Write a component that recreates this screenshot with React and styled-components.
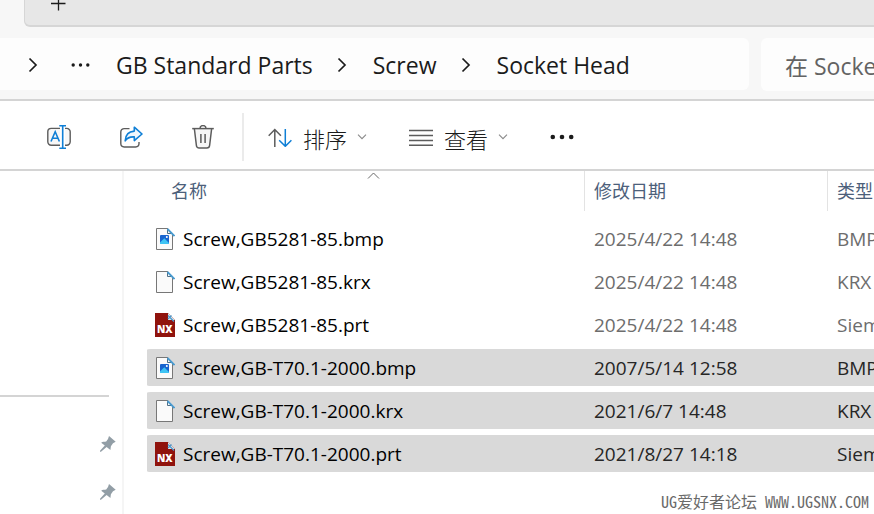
import styled, { createGlobalStyle } from 'styled-components';


const GlobalStyle = createGlobalStyle`
  * {
    box-sizing: border-box;
  }

  body {
    margin: 0;
    background: #ffffff;
    color: #1b1b1b;
    font-family: "Open Sans", "Noto Sans CJK SC", sans-serif;
  }

  button, input {
    font: inherit;
    color: inherit;
    border: none;
    background: none;
    padding: 0;
  }

  svg {
    display: block;
    flex: none;
  }
`;

const Window = styled.div`
  display: flex;
  flex-direction: column;
  height: 100vh;
  overflow: hidden;
`;

const TabStrip = styled.div`
  padding-left: 24px;
  background: #f7f7f7;
`;

const TabArea = styled.div`
  height: 27px;
  padding-left: 25px;
  background: #e7e7e7;
  border-left: 1px solid #d6d6d6;
  border-bottom: 2px solid #d6d6d6;
  border-bottom-left-radius: 6px;
`;

const AddressRow = styled.div`
  display: flex;
  align-items: flex-start;
  gap: 12px;
  padding: 11px 0 8px;
  background: #f7f7f7;
  border-bottom: 2px solid #d4d4d4;
`;

const AddressBar = styled.nav`
  flex: 1;
  display: flex;
  align-items: center;
  height: 52px;
  padding: 2px 0 0 27px;
  background: #fdfdfd;
  border-radius: 0 6px 6px 0;
`;

const Crumbs = styled.ol`
  display: flex;
  align-items: center;
  gap: 23px;
  margin: 0;
  padding: 0 0 0 26px;
  list-style: none;
  font-size: 23px;
  line-height: 32px;
`;

const Crumb = styled.li`
  display: flex;
  align-items: center;
  gap: 23px;
`;

const CrumbLink = styled.a`
  color: inherit;
  text-decoration: none;
  white-space: nowrap;
`;

const SearchInput = styled.input`
  width: 113px;
  height: 53px;
  padding: 2px 0 0 24px;
  background: #fdfdfd;
  border-radius: 6px 0 0 6px;
  font-size: 23px;

  &::placeholder {
    color: #636363;
    opacity: 1;
  }
`;

const Toolbar = styled.div`
  display: flex;
  align-items: center;
  height: 70px;
  padding: 4px 0 0 47px;
  border-bottom: 2px solid #d4d4d4;
`;

const ToolGroup = styled.div`
  display: flex;
  align-items: center;
  gap: ${props => props.$gap}px;
`;

const ToolButton = styled.button`
  display: flex;
  align-items: center;
  gap: 10px;
  font-size: 22px;
  line-height: 32px;
`;

const ToolLabel = styled.span`
  padding: 4px 0 0 1px;
  font-weight: 300;
`;

const Separator = styled.div`
  width: 2px;
  height: 48px;
  margin: 0 24px 0 27px;
  background: #ebebeb;
`;

const Body = styled.div`
  flex: 1;
  display: flex;
  min-height: 0;
`;

const Sidebar = styled.aside`
  flex: none;
  width: 124px;
  padding-top: 224px;
  border-right: 2px solid #f5f5f5;
`;

const SidebarLine = styled.hr`
  height: 2px;
  margin: 0 13px 39px 0;
  border: none;
  background: #d4d4d4;
`;

const PinList = styled.div`
  display: flex;
  flex-direction: column;
  align-items: flex-end;
  gap: 32px;
  padding-right: 6px;
`;

const Main = styled.main`
  flex: 1;
  min-width: 0;
  display: flex;
  flex-direction: column;
  padding-left: 23px;
`;

const FileTable = styled.table`
  width: 100%;
  table-layout: fixed;
  border-spacing: 0;
  font-size: 19px;
  line-height: 26px;
`;

const HeadCell = styled.th`
  width: ${props => props.$width};
  height: 46px;
  padding: 0;
  vertical-align: top;
  text-align: left;
  font-size: 18px;
  font-weight: normal;
  color: #4c607a;
`;

const HeadLabel = styled.div`
  position: relative;
  height: 40px;
  padding: 7px 0 0 ${props => props.$indent}px;
  border-right: ${props => props.$last ? 'none' : '1px solid #e3e3e3'};
  white-space: nowrap;
  overflow: hidden;
`;

const SortMark = styled.svg`
  position: absolute;
  top: 1px;
  left: 50%;
`;

const FileRow = styled.tr`
  color: ${props => props.$selected ? '#262626' : '#6d6d6d'};

  td {
    height: 43px;
    padding: 0 0 0 9px;
    border-top: 3px solid transparent;
    border-bottom: 3px solid transparent;
    background: ${props => props.$selected ? '#d9d9d9' : 'transparent'};
    background-clip: padding-box;
    white-space: nowrap;
    overflow: hidden;
  }

  td:first-child {
    padding-left: 8px;
    border-radius: 4px 0 0 4px;
  }
`;

const FileName = styled.div`
  display: flex;
  align-items: center;
  gap: 8px;
  color: #000000;
`;

const Footer = styled.footer`
  padding: 14px 5px 0 0;
  text-align: right;
  font-family: "Noto Sans Mono CJK SC", "Liberation Mono", "Noto Sans CJK SC", monospace;
  font-size: 16px;
  font-weight: 300;
  line-height: 24px;
  color: #6a6a6a;
  white-space: nowrap;
`;


const PlusIcon = () => (
  <svg width="16" height="11" viewBox="0 0 16 11" stroke="#1b1b1b" strokeWidth="1.3">
    <path d="M1 3.5H15.5M8.5 -4V10.5" />
  </svg>
);

const ChevronRight = () => (
  <svg width="14" height="16" viewBox="0 0 14 16" fill="none" stroke="#1b1b1b" strokeWidth="1.7">
    <path d="M2.5 1.5L9 8L2.5 14.5" />
  </svg>
);

const ChevronDown = () => (
  <svg width="10" height="6" viewBox="0 0 10 6" fill="none" stroke="#8a8a8a" strokeWidth="1.1">
    <path d="M1 .7L5 4.7L9 .7" />
  </svg>
);

const Dots = ({ width, radius }) => (
  <svg width={width} height="8" viewBox={`0 0 ${width} 8`} fill="#1b1b1b">
    <circle cx={radius + 0.5} cy="4" r={radius} />
    <circle cx={width / 2} cy="4" r={radius} />
    <circle cx={width - radius - 0.5} cy="4" r={radius} />
  </svg>
);

const RenameIcon = () => (
  <svg width="24" height="24" viewBox="0 0 24 24" fill="none" strokeWidth="1.4">
    <path d="M13 3.4H4.2A3.4 3.4 0 0 0 .8 6.8V16.8A3.4 3.4 0 0 0 4.2 20.2H13" fill="#f7f7f7" stroke="#5c5c5c" />
    <path d="M18 3.4H19.8A3.4 3.4 0 0 1 23.2 6.8V16.8A3.4 3.4 0 0 1 19.8 20.2H18" fill="#f7f7f7" stroke="#5c5c5c" />
    <path d="M4 16.5L8.2 6.8L12.4 16.5M5.5 13.2H11" stroke="#0f7fd6" strokeWidth="1.6" />
    <path d="M12.3 .8H19M12.3 23.2H19M15.7 .8V23.2" stroke="#0f7fd6" strokeWidth="1.6" />
  </svg>
);

const ShareIcon = () => (
  <svg width="24" height="24" viewBox="0 0 24 24" fill="none" strokeWidth="1.4" strokeLinejoin="round">
    <path d="M10.5 3.6H5.2A3.4 3.4 0 0 0 1.8 7V18.6A3.4 3.4 0 0 0 5.2 22H16.6A3.4 3.4 0 0 0 20 18.6V17" stroke="#5c5c5c" />
    <path d="M15.3 2.2L23 9L15.3 15.6V11.9C11 11.6 8 13 6.2 15.8C6.4 10.3 9.5 6.5 15.3 6.1Z" fill="#f0f7fd" stroke="#0f7fd6" strokeWidth="1.6" />
  </svg>
);

const TrashIcon = () => (
  <svg width="24" height="24" viewBox="0 0 24 24" fill="none" stroke="#5c5c5c" strokeWidth="1.5">
    <path d="M3.4 4L5.4 20.5A2.8 2.8 0 0 0 8.2 23H15.8A2.8 2.8 0 0 0 18.6 20.5L20.6 4" fill="#f7f7f7" />
    <path d="M1.2 3.6H22.8" />
    <path d="M9 3.6A3 3 0 0 1 15 3.6M9.9 9V18M14.1 9V18" />
  </svg>
);

const SortIcon = () => (
  <svg width="24" height="20" viewBox="0 0 24 20" fill="none" strokeWidth="1.5">
    <path d="M6.8 20V2.5M.7 8.7L6.8 2.5L12.9 8.7" stroke="#5c5c5c" />
    <path d="M17.3 2V19.3M11.2 13.2L17.3 19.3L23.4 13.2" stroke="#0f7fd6" />
  </svg>
);

const ViewIcon = () => (
  <svg width="24" height="18" viewBox="0 0 24 18" stroke="#5c5c5c" strokeWidth="1.4">
    <path d="M0 2.5H24M0 7.5H24M0 12.5H24M0 17.3H24" />
  </svg>
);

const PinIcon = () => (
  <svg width="16" height="16" viewBox="0 0 16 16" fill="#929ea6">
    <path d="M9 0L15.7 5.8L13 7.3L10.9 10.2L10.4 14L6.6 11L1 15.8H0V14.8L4.8 9.4L1.2 6.8C2.6 5.6 4.5 5.9 6.2 5.6L8 3Z" />
  </svg>
);

const FileIcon = ({ kind }) => {
  if (kind === 'prt') {
    return (
      <svg width="20" height="24" viewBox="0 0 20 24">
        <path d="M0 0H13L20 7V24H0Z" fill="#90130d" />
        <path d="M13 0V7H20Z" fill="#dfe3e6" />
        <path d="M13 2.5L19 8.5M13 6L16.5 2.5" stroke="#4a9bd0" strokeWidth="1.3" />
        <text x="2" y="20" fill="#ffffff" fontFamily="Open Sans, sans-serif" fontSize="10" fontWeight="800">NX</text>
      </svg>
    );
  }

  return (
    <svg width="20" height="24" viewBox="0 0 20 24" fill="none">
      <path d="M1.5 1.5H12.5L17.5 6.5V22.5H1.5Z" fill="#fafafa" stroke="#777777" />
      <path d="M12.5 1.5V6.5H17.5" stroke="#4e6f86" />
      <path d="M12.5 2L19.5 9" stroke="#4a9bd0" strokeWidth="1.8" />
      { kind === 'bmp' &&
        <>
          <rect x="5" y="8" width="9" height="9" rx="1" fill="#1764cf" />
          <path d="M5 15.5L9.3 11.3L14 16V17H5Z" fill="#3fc4f4" />
          <circle cx="11.8" cy="10" r="1" fill="#ffffff" />
        </>
      }
    </svg>
  );
};


const crumbs = ['GB Standard Parts', 'Screw', 'Socket Head'];

const files = [
  { name: 'Screw,GB5281-85.bmp', kind: 'bmp', date: '2025/4/22 14:48', type: 'BMP 文件' },
  { name: 'Screw,GB5281-85.krx', kind: 'krx', date: '2025/4/22 14:48', type: 'KRX 文件' },
  { name: 'Screw,GB5281-85.prt', kind: 'prt', date: '2025/4/22 14:48', type: 'Siemens Part File' },
  { name: 'Screw,GB-T70.1-2000.bmp', kind: 'bmp', date: '2007/5/14 12:58', type: 'BMP 文件', selected: true },
  { name: 'Screw,GB-T70.1-2000.krx', kind: 'krx', date: '2021/6/7 14:48', type: 'KRX 文件', selected: true },
  { name: 'Screw,GB-T70.1-2000.prt', kind: 'prt', date: '2021/8/27 14:18', type: 'Siemens Part File', selected: true },
];


const Navigation = () => (
  <AddressRow>
    <AddressBar>
      <ToolGroup $gap={30}>
        <ChevronRight />
        <ToolButton aria-label="更多位置"><Dots width={19} radius={1.7} /></ToolButton>
      </ToolGroup>
      <Crumbs>
        { crumbs.map((crumb, i) => (
          <Crumb key={crumb}>
            { i > 0 && <ChevronRight /> }
            <CrumbLink href="#">{crumb}</CrumbLink>
          </Crumb>
        ))}
      </Crumbs>
    </AddressBar>
    <SearchInput type="text" aria-label="搜索" placeholder="在 Socket Head 中搜索" />
  </AddressRow>
);

const Commands = () => (
  <Toolbar>
    <ToolGroup $gap={48}>
      <ToolButton aria-label="重命名"><RenameIcon /></ToolButton>
      <ToolButton aria-label="共享"><ShareIcon /></ToolButton>
      <ToolButton aria-label="删除"><TrashIcon /></ToolButton>
    </ToolGroup>
    <Separator />
    <ToolGroup $gap={42}>
      <ToolButton><SortIcon /><ToolLabel>排序</ToolLabel><ChevronDown /></ToolButton>
      <ToolButton><ViewIcon /><ToolLabel>查看</ToolLabel><ChevronDown /></ToolButton>
      <ToolButton aria-label="更多"><Dots width={24} radius={2.3} /></ToolButton>
    </ToolGroup>
  </Toolbar>
);

const FileList = () => (
  <FileTable>
    <thead>
      <tr>
        <HeadCell $width="438px">
          <HeadLabel $indent={24}>
            名称
            <SortMark width="14" height="8" viewBox="0 0 14 8" fill="none" stroke="#6a6a6a">
              <path d="M2 6.5L7.5 1L13 6.5" />
            </SortMark>
          </HeadLabel>
        </HeadCell>
        <HeadCell $width="243px"><HeadLabel $indent={9}>修改日期</HeadLabel></HeadCell>
        <HeadCell><HeadLabel $indent={9} $last>类型</HeadLabel></HeadCell>
      </tr>
    </thead>
    <tbody>
      { files.map(file => (
        <FileRow key={file.name} $selected={file.selected}>
          <td><FileName><FileIcon kind={file.kind} />{file.name}</FileName></td>
          <td>{file.date}</td>
          <td>{file.type}</td>
        </FileRow>
      ))}
    </tbody>
  </FileTable>
);

const App = () => (
  <Window>
    <GlobalStyle />
    <TabStrip>
      <TabArea>
        <ToolButton aria-label="新建标签页"><PlusIcon /></ToolButton>
      </TabArea>
    </TabStrip>
    <Navigation />
    <Commands />
    <Body>
      <Sidebar>
        <SidebarLine />
        <PinList>
          <PinIcon />
          <PinIcon />
        </PinList>
      </Sidebar>
      <Main>
        <FileList />
        <Footer>UG爱好者论坛 WWW.UGSNX.COM</Footer>
      </Main>
    </Body>
  </Window>
);

export default App;
